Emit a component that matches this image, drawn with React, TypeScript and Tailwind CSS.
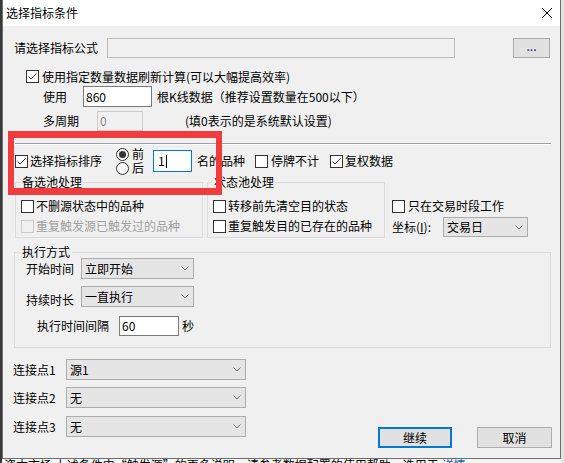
import React from 'react';

const Check: React.FC<{ checked?: boolean; disabled?: boolean }> = ({ checked, disabled }) => (
  <span
    className={
      disabled
        ? 'flex h-[13px] w-[13px] shrink-0 items-center justify-center border border-[#cccccc] bg-[#f0f0f0]'
        : 'flex h-[13px] w-[13px] shrink-0 items-center justify-center border border-[#333333] bg-white'
    }
  >
    {checked && (
      <svg width="11" height="11" viewBox="0 0 11 11">
        <polyline points="1.5,5.5 4,8 9.5,2.5" fill="none" stroke="#333333" strokeWidth="1" />
      </svg>
    )}
  </span>
);

const Radio: React.FC<{ checked?: boolean }> = ({ checked }) => (
  <span className="flex h-[13px] w-[13px] shrink-0 items-center justify-center rounded-full border border-[#333333] bg-white">
    {checked && <span className="h-[7px] w-[7px] rounded-full bg-[#333333]" />}
  </span>
);

const Chevron = () => (
  <svg width="8" height="5" viewBox="0 0 8 5">
    <polyline points="0.5,0.5 4,4 7.5,0.5" fill="none" stroke="#707070" strokeWidth="1" />
  </svg>
);

const Select: React.FC<{ value: string; className: string }> = ({ value, className }) => (
  <div className={`flex items-center justify-between border border-[#acacac] bg-[#e5e5e5] pl-[3px] pr-[4px] ${className}`}>
    <span>{value}</span>
    <Chevron />
  </div>
);

const Row: React.FC<{ label: React.ReactNode; checked?: boolean; disabled?: boolean }> = ({ label, checked, disabled }) => (
  <div className="flex h-[20px] items-center pl-[5px]">
    <Check checked={checked} disabled={disabled} />
    <span className={disabled ? 'ml-[2px] text-[#a0a0a0]' : 'ml-[2px]'}>{label}</span>
  </div>
);

export default function App() {
  return (
    <div className="relative flex h-[463px] w-[564px] overflow-hidden bg-[#e9e9e9] font-['Noto_Sans_CJK_SC',sans-serif] text-[12px] leading-[14px] text-black">
      <div className="w-[2px] shrink-0 bg-[#3a3a3a]" />

      <div className="flex w-[559px] shrink-0 flex-col">
        <div className="flex h-[459px] shrink-0 flex-col border-x border-b border-[#6e6e6e]">
          {/* title bar */}
          <div className="flex h-[26px] shrink-0 items-center justify-between bg-white pl-[3px] pr-[8px]">
            <span>选择指标条件</span>
            <svg width="10" height="10" viewBox="0 0 10 10">
              <path d="M0 0L10 10M10 0L0 10" stroke="#000" strokeWidth="1" />
            </svg>
          </div>

          <div className="flex-1 bg-[#f0f0f0]">
            {/* formula */}
            <div className="mt-[12px] flex h-[20px] items-center pl-[11px]">
              <span className="w-[93px]">请选择指标公式</span>
              <div className="h-[20px] w-[348px] border border-[#bcbcbc] bg-[#f0f0f0]" />
              <button className="ml-[58px] flex h-[20px] w-[37px] items-center justify-center border border-[#adadad] bg-[#e1e1e1] pb-[4px] text-[#1a1a5a]">
                ...
              </button>
            </div>

            <div className="mt-[9px] flex h-[19px] items-center pl-[23px]">
              <Check checked />
              <span className="ml-[3px]">使用指定数量数据刷新计算(可以大幅提高效率)</span>
            </div>

            <div className="flex h-[21px] items-center pl-[40px]">
              <span className="w-[40px]">使用</span>
              <div className="flex h-[21px] w-[69px] items-center border border-[#7a7a7a] bg-white pl-[2px]">860</div>
              <span className="ml-[5px]">根K线数据（推荐设置数量在500以下）</span>
            </div>

            <div className="mt-[4px] flex h-[20px] items-center pl-[40px]">
              <span className="w-[54px]">多周期</span>
              <div className="flex h-[20px] w-[46px] items-center border border-[#cccccc] bg-[#f0f0f0] pl-[2px] text-[#8a8a8a]">0</div>
              <span className="ml-[42px]">(填0表示的是系统默认设置)</span>
            </div>

            <div className="ml-[12px] mt-[12px] h-[2px] w-[536px] border-b border-t border-b-white border-t-[#a0a0a0]" />

            {/* sort row */}
            <div className="mt-[2px] flex h-[28px] items-center pl-[12px]">
              <Check checked />
              <span className="ml-[2px] w-[86px]">选择指标排序</span>
              <div className="flex w-[37px] flex-col">
                <div className="flex h-[14px] items-center">
                  <Radio checked />
                  <span className="ml-[3px] leading-[12px]">前</span>
                </div>
                <div className="flex h-[14px] items-center">
                  <Radio />
                  <span className="ml-[3px] leading-[12px]">后</span>
                </div>
              </div>
              <div className="flex h-[22px] w-[39px] items-center border border-[#0078d7] bg-white pl-[4px]">
                <span>1</span>
                <span className="ml-[1px] h-[13px] w-px bg-black" />
              </div>
              <span className="ml-[5px] w-[58px]">名的品种</span>
              <Check />
              <span className="ml-[3px] w-[59px]">停牌不计</span>
              <Check checked />
              <span className="ml-[2px]">复权数据</span>
            </div>

            {/* pools */}
            <div className="flex items-start pl-[12px]">
              <fieldset className="h-[63px] w-[188px] border border-[#dcdcdc]">
                <legend className="ml-[4px] px-[2px] leading-[14px]">备选池处理</legend>
                <div className="mt-[7px]">
                  <Row label="不删源状态中的品种" />
                  <Row label="重复触发源已触发过的品种" disabled />
                </div>
              </fieldset>
              <fieldset className="ml-[4px] h-[63px] w-[178px] border border-[#dcdcdc]">
                <legend className="ml-[4px] px-[2px] leading-[14px]">状态池处理</legend>
                <div className="mt-[7px]">
                  <Row label="转移前先清空目的状态" />
                  <Row label="重复触发目的已存在的品种" />
                </div>
              </fieldset>
              <div className="ml-[7px] pt-[21px]">
                <div className="flex h-[20px] items-center">
                  <Check />
                  <span className="ml-[3px]">只在交易时段工作</span>
                </div>
                <div className="mt-[1px] flex h-[20px] items-center">
                  <span className="w-[51px]">
                    坐标(<span className="underline">I</span>):
                  </span>
                  <Select value="交易日" className="h-[20px] w-[85px]" />
                </div>
              </div>
            </div>

            {/* execution */}
            <fieldset className="ml-[11px] mt-[8px] h-[102px] w-[537px] border border-[#dcdcdc]">
              <legend className="ml-[5px] px-[2px] leading-[12px]">执行方式</legend>
              <div className="flex h-[21px] items-center pl-[11px]">
                <span className="w-[55px]">开始时间</span>
                <Select value="立即开始" className="h-[21px] w-[113px]" />
              </div>
              <div className="mt-[7px] flex h-[21px] items-center pl-[11px]">
                <span className="w-[55px] self-end">持续时长</span>
                <Select value="一直执行" className="h-[21px] w-[113px]" />
              </div>
              <div className="mt-[9px] flex h-[20px] items-center pl-[22px]">
                <span className="w-[82px]">执行时间间隔</span>
                <div className="flex h-[20px] w-[60px] items-center border border-[#7a7a7a] bg-white pl-[2px]">60</div>
                <span className="ml-[3px]">秒</span>
              </div>
            </fieldset>

            {/* connections + buttons */}
            <div className="mt-[11px] flex items-start">
              <div className="pl-[10px]">
                <div className="flex h-[21px] items-center">
                  <span className="w-[53px]">连接点1</span>
                  <Select value="源1" className="h-[21px] w-[180px]" />
                </div>
                <div className="mt-[7px] flex h-[21px] items-center">
                  <span className="w-[53px]">连接点2</span>
                  <Select value="无" className="h-[21px] w-[180px]" />
                </div>
                <div className="mt-[8px] flex h-[21px] items-center">
                  <span className="w-[53px]">连接点3</span>
                  <Select value="无" className="h-[21px] w-[180px]" />
                </div>
              </div>
              <div className="ml-[132px] flex gap-[25px] pt-[68px]">
                <button className="flex h-[21px] w-[74px] items-center justify-center border-2 border-[#0078d7] bg-[#e1e1e1]">继续</button>
                <button className="flex h-[21px] w-[75px] items-center justify-center border border-[#adadad] bg-[#e1e1e1]">取消</button>
              </div>
            </div>
          </div>
        </div>

        <div className="shrink-0 whitespace-nowrap bg-[#f5f5f5] pl-[2px] leading-[12px]">
          资本市场 上述条件中“触发源”的更多说明，请参考数据配置的使用帮助，选用于 <span className="text-[#1a5fb4]">详情</span>
        </div>
      </div>

      <div className="flex-1 bg-[#e4e4e4]" />

      <div className="absolute left-[8px] top-[131px] h-[64px] w-[214px] border-x-[6px] border-y-[7px] border-[#f03c3c]" />
    </div>
  );
}
